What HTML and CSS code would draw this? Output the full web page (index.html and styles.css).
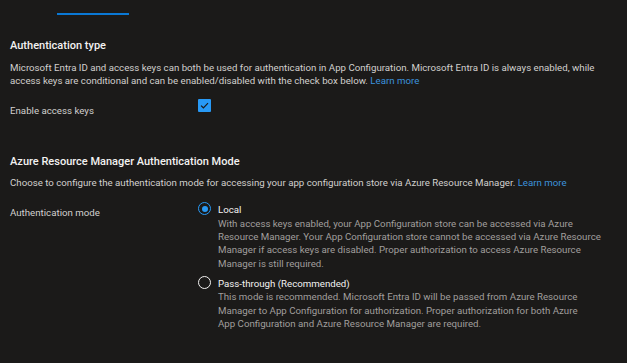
FILE: index.html
```html
<!doctype html>
<html>

<head>
    <title>Access settings</title>
    <link rel="stylesheet" href="styles.css">
</head>

<body>
    <div class="tabs">
        <div class="tab_active"></div>
    </div>

    <div class="section">
        <h3 class="title">Authentication type</h3>
        <p class="info">Microsoft Entra ID and access keys can both be used for authentication in App Configuration. Microsoft Entra ID is always enabled, while access keys are conditional and can be enabled/disabled with the check box below. <a href="#">Learn more</a></p>
        <div class="row row_check">
            <div class="label">Enable access keys</div>
            <div class="control">
                <span class="checkbox">
                    <svg width="9" height="7" viewBox="0 0 9 7"><path d="M1 3.6 L3.4 5.8 L8 1.2" fill="none" stroke="#1b1a19" stroke-width="1.2"/></svg>
                </span>
            </div>
        </div>
    </div>

    <div class="section section2">
        <h3 class="title">Azure Resource Manager Authentication Mode</h3>
        <p class="info">Choose to configure the authentication mode for accessing your app configuration store via Azure Resource Manager. <a href="#">Learn more</a></p>
        <div class="row row_radio">
            <div class="label label_radio">Authentication mode</div>
            <div class="control options">
                <div class="option">
                    <span class="radio checked"></span>
                    <div class="option_text">
                        <div class="option_name">Local</div>
                        <div class="option_desc">With access keys enabled, your App Configuration store can be accessed via Azure Resource Manager. Your App Configuration store cannot be accessed via Azure Resource Manager if access keys are disabled. Proper authorization to access Azure Resource Manager is still required.</div>
                    </div>
                </div>
                <div class="option">
                    <span class="radio"></span>
                    <div class="option_text">
                        <div class="option_name">Pass-through (Recommended)</div>
                        <div class="option_desc">This mode is recommended. Microsoft Entra ID will be passed from Azure Resource Manager to App Configuration for authorization. Proper authorization for both Azure<br>App Configuration and Azure Resource Manager are required.</div>
                    </div>
                </div>
            </div>
        </div>
    </div>
</body>

</html>
```

FILE: styles.css
```css
body {
    margin: 0;
    padding: 0 10px;
    background-color: #1b1a19;
    color: #d2d0ce;
    font-family: Roboto, "Noto Sans", sans-serif;
    font-size: 9.7px;
    line-height: 13.33px;
    overflow: hidden;
}

a {
    color: #3b92dc;
    text-decoration: none;
}

.tabs {
    height: 15px;
    padding-top: 13px;
    box-sizing: border-box;
}

.tab_active {
    margin-left: 47px;
    width: 72px;
    height: 2px;
    background-color: #0a78d4;
}

.title {
    margin: 23px 0 0 0;
    font-size: 11px;
    line-height: 16px;
    font-weight: 500;
    color: #f3f2f1;
}

.section2 .title {
    margin-top: 37px;
}

.info {
    margin: 7px 0 0 0;
}

.section2 .info {
    margin-top: 6px;
}

.row {
    display: flex;
}

.row_check {
    margin-top: 11px;
}

.row_radio {
    margin-top: 13px;
}

.label {
    width: 188px;
    flex: none;
    padding-top: 5px;
}

.label_radio {
    padding-top: 4px;
}

.control {
    flex: 1;
}

.checkbox {
    display: flex;
    align-items: center;
    justify-content: center;
    width: 13px;
    height: 13px;
    background-color: #2899f5;
    border-radius: 1px;
}

.options {
    display: flex;
    flex-direction: column;
    gap: 6px;
}

.option {
    display: flex;
    gap: 7px;
}

.radio {
    flex: none;
    width: 13px;
    height: 13px;
    box-sizing: border-box;
    border: 1px solid #f3f2f1;
    border-radius: 50%;
    position: relative;
}

.radio.checked {
    border-color: #2899f5;
}

.radio.checked::after {
    content: "";
    position: absolute;
    left: 2.5px;
    top: 2.5px;
    width: 6px;
    height: 6px;
    border-radius: 50%;
    background-color: #2899f5;
}

.option_text {
    padding-top: 1px;
    width: 390px;
}

.option_name {
    color: #f3f2f1;
}

.option_desc {
    color: #a19f9d;
}
```
